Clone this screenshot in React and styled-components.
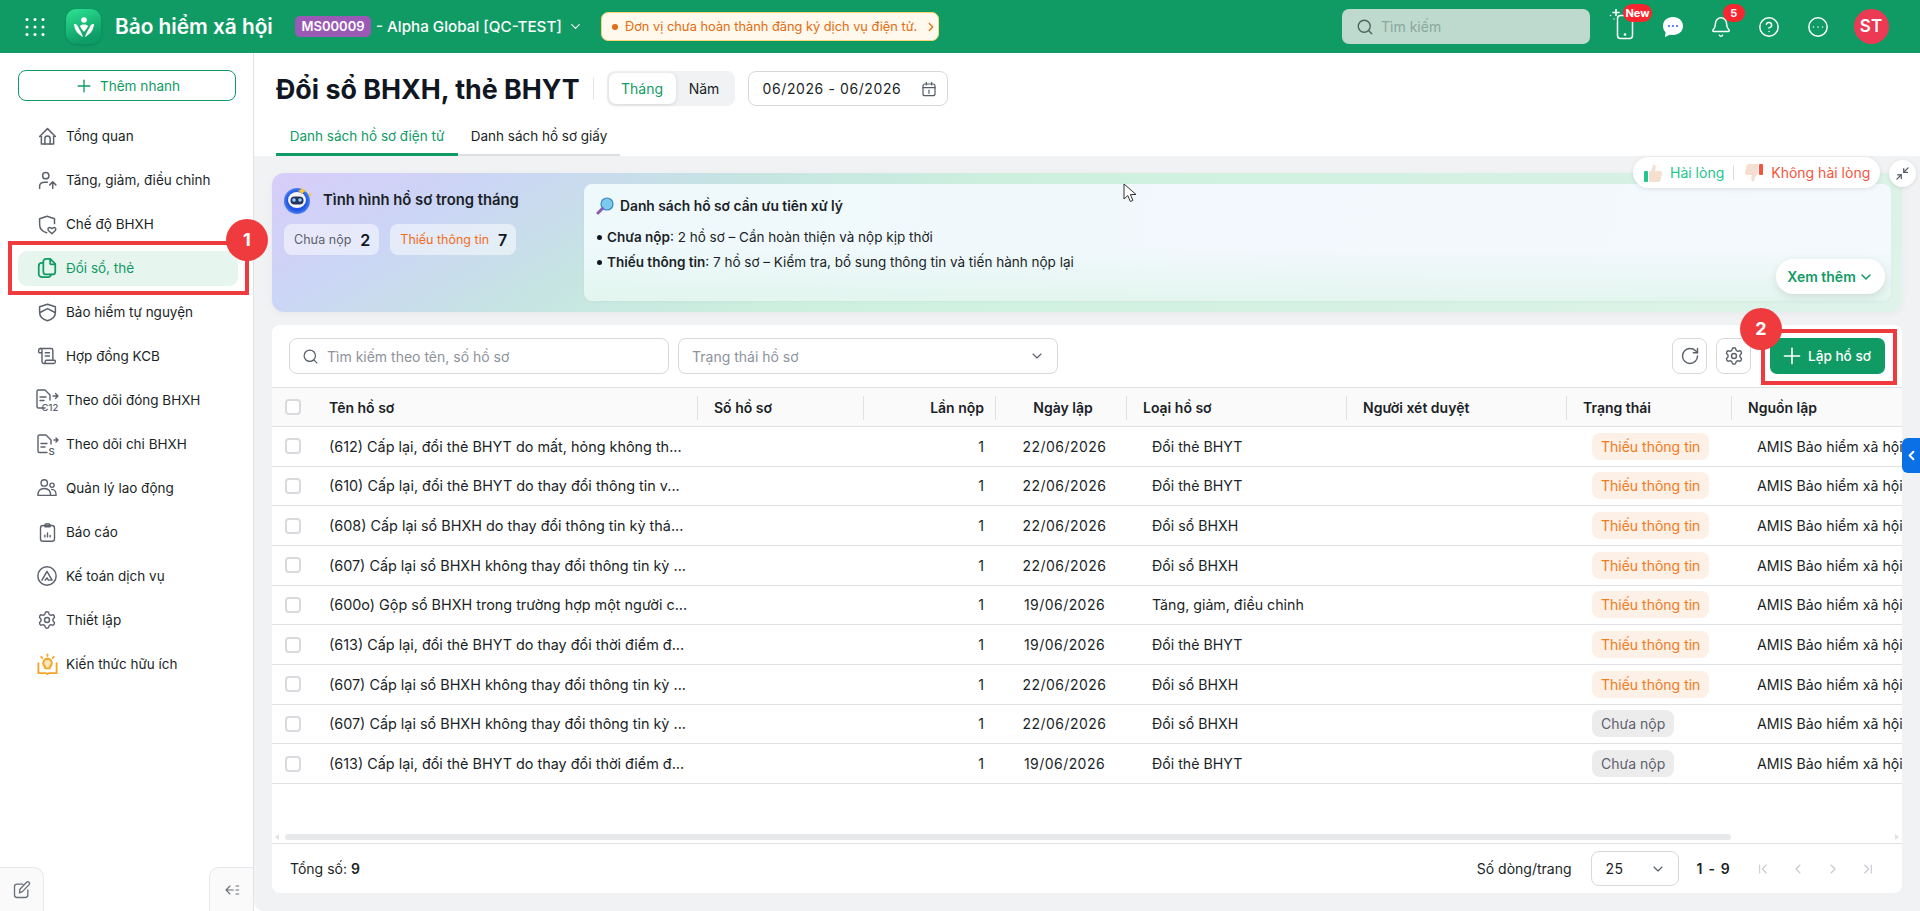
import React from 'react'
import styled, { createGlobalStyle } from 'styled-components'
import {
  Search, Plus, ChevronDown, ChevronRight, ChevronLeft, ChevronFirst, ChevronLast,
  Bell, CircleHelp, CircleEllipsis, RotateCw, Settings, Minimize2, ScrollText,
} from 'lucide-react'

const GREEN = '#109b64'

const NAV = [
  ['Tổng quan', 'home'],
  ['Tăng, giảm, điều chỉnh', 'userUp'],
  ['Chế độ BHXH', 'shieldHeart'],
  ['Đổi sổ, thẻ', 'copy'],
  ['Bảo hiểm tự nguyện', 'shield'],
  ['Hợp đồng KCB', 'scroll'],
  ['Theo dõi đóng BHXH', 'c12'],
  ['Theo dõi chi BHXH', 'fileS'],
  ['Quản lý lao động', 'users'],
  ['Báo cáo', 'report'],
  ['Kế toán dịch vụ', 'account'],
  ['Thiết lập', 'gear'],
  ['Kiến thức hữu ích', 'bulb'],
]

const MISSING = 'Thiếu thông tin'
const DRAFT = 'Chưa nộp'

const ROWS = [
  ['(612) Cấp lại, đổi thẻ BHYT do mất, hỏng không th...', '22/06/2026', 'Đổi thẻ BHYT', MISSING],
  ['(610) Cấp lại, đổi thẻ BHYT do thay đổi thông tin v...', '22/06/2026', 'Đổi thẻ BHYT', MISSING],
  ['(608) Cấp lại sổ BHXH do thay đổi thông tin kỳ thá...', '22/06/2026', 'Đổi sổ BHXH', MISSING],
  ['(607) Cấp lại sổ BHXH không thay đổi thông tin kỳ ...', '22/06/2026', 'Đổi sổ BHXH', MISSING],
  ['(600o) Gộp sổ BHXH trong trường hợp một người c...', '19/06/2026', 'Tăng, giảm, điều chỉnh', MISSING],
  ['(613) Cấp lại, đổi thẻ BHYT do thay đổi thời điểm đ...', '19/06/2026', 'Đổi thẻ BHYT', MISSING],
  ['(607) Cấp lại sổ BHXH không thay đổi thông tin kỳ ...', '22/06/2026', 'Đổi sổ BHXH', MISSING],
  ['(607) Cấp lại sổ BHXH không thay đổi thông tin kỳ ...', '22/06/2026', 'Đổi sổ BHXH', DRAFT],
  ['(613) Cấp lại, đổi thẻ BHYT do thay đổi thời điểm đ...', '19/06/2026', 'Đổi thẻ BHYT', DRAFT],
]

const Svg = ({ size = 20, children, ...rest }) => (
  <svg width={size} height={size} viewBox="0 0 24 24" fill="none" stroke="currentColor" strokeWidth="1.7" strokeLinecap="round" strokeLinejoin="round" {...rest}>
    {children}
  </svg>
)

const NavIcon = ({ name }) => {
  switch (name) {
    case 'home':
      return <Svg size={21}><path d="M3 12 12 3l9 9M5 10v10.500h14V10" /><path d="M9 20.500v-6a3 3 0 0 1 6 0v6" /></Svg>
    case 'userUp':
      return <Svg size={21}><circle cx="10" cy="6.500" r="3.600" /><path d="M3 21v-2.500C3 15.500 5.500 14 9 14h3" /><path d="M18 21v-7M14.500 17l3.500-3.500 3.500 3.500" /></Svg>
    case 'shieldHeart':
      return <Svg size={21}><path d="M11 21.500C6 20 3 16.500 3 12V5.500L11.500 2.500 20 5.500V11" /><path d="M17 22.500l-4-3.700c-1.500-2 .8-4.300 2.700-3L17 16.700l1.300-.9c1.900-1.300 4.200 1 2.700 3z" /></Svg>
    case 'copy':
      return <Svg size={22} strokeWidth="1.900"><path d="M8 6.500H6.500A3.500 3.500 0 0 0 3 10v8.500A3.500 3.500 0 0 0 6.500 22H13a3.500 3.500 0 0 0 3.500-3" /><path d="M8 5a3 3 0 0 1 3-3h4.500L21 7.500V16a3 3 0 0 1-3 3h-7a3 3 0 0 1-3-3z" /><path d="M15.500 2.500V7a1 1 0 0 0 1 1H21" /></Svg>
    case 'shield':
      return <Svg size={21}><path d="M12 2.500 21 5.500V12c0 5-4 8-9 9.500C7 20 3 17 3 12V5.500z" /><path d="M3.500 12 12 7.500l8.500 4.500" /></Svg>
    case 'scroll':
      return <ScrollText size={20} strokeWidth={1.7} />
    case 'c12':
      return (
        <Svg size={24} strokeWidth="1.400" overflow="visible">
          <path d="M10 20H3.500A1.500 1.500 0 0 1 2 18.500V3.500A1.500 1.500 0 0 1 3.500 2H10l5 5v5" />
          <path d="M5 9h6M5 12.500h4M18 8h5M20.500 5.500 23 8l-2.500 2.500" />
          <text x="6.500" y="22.500" fontSize="9.500" fontFamily="Inter, sans-serif" fontWeight="500" fill="currentColor" stroke="none">C12</text>
        </Svg>
      )
    case 'fileS':
      return (
        <Svg size={24} strokeWidth="1.400" overflow="visible">
          <path d="M12 20.500H4.500A1.500 1.500 0 0 1 3 19V4.500A1.500 1.500 0 0 1 4.500 3H11l5 5v4" />
          <path d="M6 11.500h6M6 15h4M19 8h4M21 6l2 2-2 2" />
          <text x="13.500" y="22.500" fontSize="9.500" fontFamily="Inter, sans-serif" fontWeight="600" fill="currentColor" stroke="none">S</text>
        </Svg>
      )
    case 'users':
      return <Svg size={22} strokeWidth="1.500"><circle cx="9" cy="6.500" r="3.500" /><circle cx="17.500" cy="9" r="2.300" /><path d="M2 20c0-5 2.500-7.500 7-7.500s7 2.500 7 7.500zM17 13.500c3 0 5 2 5 6.500h-6" /></Svg>
    case 'report':
      return <Svg size={21} strokeWidth="1.600"><rect x="4" y="4" width="16" height="18" rx="3" /><path d="M9 4a3 2 0 0 1 6 0v1.500H9zM9 17v-2M12 17v-4.500M15 17v-1.500" /></Svg>
    case 'account':
      return <Svg size={22} strokeWidth="1.600"><circle cx="12" cy="12" r="10" /><path d="M6.500 16.500 12 7l5.500 9.500h-4L12 14l-2 2.500" /></Svg>
    case 'gear':
      return <Settings size={20} strokeWidth={1.7} />
    case 'bulb':
      return (
        <Svg size={23} strokeWidth="1.900" stroke="#f5a425">
          <path d="M12 6a4.500 4.500 0 0 0-2.500 8.200V16h5v-1.800A4.500 4.500 0 0 0 12 6z" fill="#fde8bd" />
          <path d="M2.500 10.500V21H9.500c1 0 2 .5 2.500 1 .5-.5 1.500-1 2.500-1h7V10.500M12 1.500v1.500M5.500 4l1 1.200M18.500 4l-1 1.200" />
        </Svg>
      )
    default:
      return null
  }
}

const Logo = () => (
  <LogoBox>
    <svg width="24" height="24" viewBox="0 0 24 24" fill="#fff">
      <circle cx="12" cy="5" r="2.800" />
      <path d="M11 22C7 20 2.500 16 2 9c2-.5 4 1.500 4.500 3.500C7.500 15 9.500 17 11 22z" />
      <path d="M13 22c4-2 8.500-6 9-13-2-.5-4 1.500-4.500 3.500C16.500 15 14.500 17 13 22z" />
      <path d="M8 11c1.500-2 6.500-2 8 0-1 2.500-2.500 4-4 6-1.500-2-3-3.500-4-6z" />
    </svg>
  </LogoBox>
)

const AppsGrid = () => (
  <svg width="20" height="18" viewBox="0 0 20 18" fill="#fff">
    {[1.5, 9, 16.5].map((y) => [2, 10, 18].map((x) => <circle key={`${x}-${y}`} cx={x} cy={y} r="1.500" />))}
  </svg>
)

const ChatIcon = () => (
  <svg width="22" height="22" viewBox="0 0 22 22">
    <path d="M11 1C5.200 1 1 4.800 1 10c0 2.500 1 4.600 2.600 6.200L3 21l4.800-2.300c1 .3 2.100.4 3.200.4 5.800 0 10-3.800 10-9S16.800 1 11 1z" fill="#fff" />
    <circle cx="7" cy="10" r="1.100" fill="#3c6cf2" /><circle cx="11" cy="10" r="1.100" fill="#3c6cf2" /><circle cx="15" cy="10" r="1.100" fill="#3c6cf2" />
  </svg>
)

const PhoneSpark = () => (
  <svg width="30" height="36" viewBox="0 0 30 36" fill="none" stroke="#fff" strokeWidth="1.500" strokeLinecap="round">
    <rect x="8.500" y="6.500" width="15" height="23" rx="3" />
    <circle cx="16" cy="25.500" r=".6" fill="#fff" />
    <path d="M7 .5v6M4 3.500h6" strokeWidth="1.600" />
    <circle cx="1.500" cy="6.500" r=".8" fill="#fff" stroke="none" />
    <circle cx="5" cy="10" r=".7" fill="#fff" stroke="none" />
  </svg>
)

const Robot = () => (
  <svg width="30" height="30" viewBox="0 0 30 30">
    <defs>
      <radialGradient id="bot" cx=".5" cy=".5" r=".6"><stop offset=".6" stopColor="#1f55e6" /><stop offset="1" stopColor="#6aa0f5" /></radialGradient>
    </defs>
    <circle cx="13" cy="16" r="13" fill="url(#bot)" />
    <ellipse cx="13" cy="15" rx="9" ry="8" fill="#f4f6fb" />
    <rect x="6.500" y="11.500" width="13" height="8" rx="4" fill="#26345c" />
    <circle cx="10" cy="15" r="1.800" fill="#8fd0ff" /><circle cx="16" cy="15" r="1.800" fill="#8fd0ff" />
    <path d="M18 1c.5 3.500 1.500 4.500 5 5-3.500.5-4.500 1.500-5 5-.5-3.500-1.500-4.500-5-5 3.500-.5 4.500-1.500 5-5z" fill="#f8c534" />
    <path d="M26 7c.2 1.500.8 2.100 2.500 2.500C26.800 9.900 26.200 10.500 26 12c-.2-1.500-.8-2.100-2.500-2.500C25.200 9.100 25.800 8.500 26 7z" fill="#f8c534" />
  </svg>
)

const Magnifier = () => (
  <svg width="18" height="18" viewBox="0 0 18 18">
    <circle cx="11" cy="7" r="6" fill="#7cc8ee" stroke="#3a87bd" strokeWidth="1.200" />
    <path d="M6.500 11.500 2 16" stroke="#8a5ab8" strokeWidth="3" strokeLinecap="round" />
  </svg>
)

const Thumb = ({ down, color }) => (
  <FlipBox $down={down}>
    <svg width="20" height="20" viewBox="0 0 20 20">
      <rect x="1" y="8" width="4" height="11" rx="1" fill={color} />
      <path d="M6 9c2-1 3.500-3 4-7 .2-1 2.700-.6 2.700 2 0 1.500-.4 3-.7 4h5c1.500 0 2.400 1.200 2 2.500l-1.500 6.500c-.3 1.200-1.200 2-2.500 2H6z" fill="#f5dfd0" />
    </svg>
  </FlipBox>
)

const Cursor = () => (
  <svg width="14" height="20" viewBox="0 0 14 20">
    <path d="M1 1v15l3.800-3.500 2.500 6 2.600-1.100-2.500-5.900H13z" fill="#fff" stroke="#333" strokeWidth="1" />
  </svg>
)

const CalendarIcon = () => (
  <Svg size={16} strokeWidth="1.800" color="#555b66">
    <rect x="3" y="4.500" width="18" height="17.500" rx="3" />
    <path d="M3 10h18M8 2v4M16 2v4M12 13.500v5" />
  </Svg>
)

const PencilIcon = () => (
  <Svg size={20} strokeWidth="1.600">
    <path d="M13 5H6a3 3 0 0 0-3 3v10a3 3 0 0 0 3 3h10a3 3 0 0 0 3-3v-6" />
    <path d="M9 15.500 9.500 11l8-8.300a2 2 0 0 1 3 2.800L12.500 14z" />
  </Svg>
)

const CollapseIcon = () => (
  <Svg size={16} strokeWidth="1.700">
    <path d="M9 6 3 12l6 6M3 12h11M18 6h4M18 12h4M18 18h4" />
  </Svg>
)

const App = () => (
  <Page>
    <GlobalStyle />
    <TopBar>
      <GridBtn><AppsGrid /></GridBtn>
      <Logo />
      <Brand>Bảo hiểm xã hội</Brand>
      <OrgCode>MS00009</OrgCode>
      <OrgName>- Alpha Global [QC-TEST]</OrgName>
      <ChevronDown size={15} color="#fff" strokeWidth={1.8} />
      <Notice>
        <NoticeDot />
        Đơn vị chưa hoàn thành đăng ký dịch vụ điện tử.
        <ChevronRight size={14} strokeWidth={2.2} />
      </Notice>
      <TopSearch>
        <Search size={18} color="#4d6258" strokeWidth={1.8} />
        Tìm kiếm
      </TopSearch>
      <TopIcons>
        <TopIcon>
          <PhoneSpark />
          <TopBadge $wide>New</TopBadge>
        </TopIcon>
        <TopIcon><ChatIcon /></TopIcon>
        <TopIcon>
          <Bell size={22} strokeWidth={1.6} />
          <TopBadge>5</TopBadge>
        </TopIcon>
        <TopIcon><CircleHelp size={22} strokeWidth={1.6} /></TopIcon>
        <TopIcon><CircleEllipsis size={22} strokeWidth={1.6} /></TopIcon>
        <Avatar>ST</Avatar>
      </TopIcons>
    </TopBar>

    <Body>
      <Sidebar>
        <QuickAdd><Plus size={20} strokeWidth={1.6} />Thêm nhanh</QuickAdd>
        <NavList>
          {NAV.map(([label, icon]) => (
            <NavItem key={label} $active={icon === 'copy'}>
              <NavIconBox $active={icon === 'copy'}><NavIcon name={icon} /></NavIconBox>
              {label}
              {icon === 'copy' && (
                <>
                  <NavMark />
                  <NavStep>1</NavStep>
                </>
              )}
            </NavItem>
          ))}
        </NavList>
        <SideFoot>
          <SideTab $side="left"><PencilIcon /></SideTab>
          <SideTab $side="right"><CollapseIcon /></SideTab>
        </SideFoot>
      </Sidebar>

      <Main>
        <MainHead>
          <TitleRow>
            <Title>Đổi sổ BHXH, thẻ BHYT</Title>
            <TitleDivider />
            <Toggle>
              <ToggleItem $active>Tháng</ToggleItem>
              <ToggleItem>Năm</ToggleItem>
            </Toggle>
            <DateRange>06/2026 - 06/2026<CalendarIcon /></DateRange>
          </TitleRow>
          <Tabs>
            <Tab $active>Danh sách hồ sơ điện tử</Tab>
            <Tab>Danh sách hồ sơ giấy</Tab>
          </Tabs>
        </MainHead>

        <Feedback>
          <Thumb color="#22c58b" />
          <FeedText $color="#22c58b">Hài lòng</FeedText>
          <FeedDivider />
          <Thumb down color="#f4553c" />
          <FeedText $color="#f4553c">Không hài lòng</FeedText>
        </Feedback>
        <ShrinkBtn><Minimize2 size={15} strokeWidth={2} /></ShrinkBtn>
        <SideHandle><ChevronLeft size={15} strokeWidth={3.2} /></SideHandle>
        <CursorMark><Cursor /></CursorMark>

        <Banner>
          <BannerLeft>
            <BannerHeading>
              <Robot />
              <BannerTitle>Tình hình hồ sơ trong tháng</BannerTitle>
            </BannerHeading>
            <Chips>
              <Chip>Chưa nộp <ChipNum>2</ChipNum></Chip>
              <Chip $warn>Thiếu thông tin <ChipNum>7</ChipNum></Chip>
            </Chips>
          </BannerLeft>
          <BannerPanel>
            <PanelTitle><Magnifier />Danh sách hồ sơ cần ưu tiên xử lý</PanelTitle>
            <Bullet><b>Chưa nộp</b>: 2 hồ sơ – Cần hoàn thiện và nộp kịp thời</Bullet>
            <Bullet><b>Thiếu thông tin</b>: 7 hồ sơ – Kiểm tra, bổ sung thông tin và tiến hành nộp lại</Bullet>
            <MoreBtn>Xem thêm<ChevronDown size={16} strokeWidth={2.2} /></MoreBtn>
          </BannerPanel>
        </Banner>

        <Card>
          <Toolbar>
            <SearchBox>
              <Search size={17} strokeWidth={1.7} color="#555b66" />
              Tìm kiếm theo tên, số hồ sơ
            </SearchBox>
            <StatusSelect>
              Trạng thái hồ sơ
              <ChevronDown size={16} strokeWidth={1.6} color="#555b66" />
            </StatusSelect>
            <ToolRight>
              <IconBtn><RotateCw size={20} strokeWidth={1.7} /></IconBtn>
              <IconBtn><Settings size={20} strokeWidth={1.7} /></IconBtn>
              <CreateWrap>
                <CreateBtn><Plus size={26} strokeWidth={1.5} />Lập hồ sơ</CreateBtn>
                <CreateMark />
                <CreateStep>2</CreateStep>
              </CreateWrap>
            </ToolRight>
          </Toolbar>

          <TableWrap>
            <HeadRow>
              <CheckCell><Check /></CheckCell>
              <HeadCell $pad="17px">Tên hồ sơ</HeadCell>
              <HeadCell $pad="16px">Số hồ sơ</HeadCell>
              <HeadCell $align="right">Lần nộp</HeadCell>
              <HeadCell $align="center" $pad="3px">Ngày lập</HeadCell>
              <HeadCell $pad="16px">Loại hồ sơ</HeadCell>
              <HeadCell $pad="16px">Người xét duyệt</HeadCell>
              <HeadCell $pad="16px">Trạng thái</HeadCell>
              <HeadCell $pad="16px" $last>Nguồn lập</HeadCell>
            </HeadRow>
            {ROWS.map(([name, date, kind, status], i) => (
              <Row key={i}>
                <CheckCell><Check /></CheckCell>
                <NameCell $pad="17px">{name}</NameCell>
                <Cell />
                <Cell $align="right">1</Cell>
                <DateCell>{date}</DateCell>
                <Cell $pad="25px">{kind}</Cell>
                <Cell />
                <Cell $pad="25px"><Pill $warn={status === MISSING}>{status}</Pill></Cell>
                <Cell $pad="25px">AMIS Bảo hiểm xã hội</Cell>
              </Row>
            ))}
          </TableWrap>

          <ScrollBar>
            <ScrollArrow />
            <ScrollThumb />
            <ScrollArrow $right />
          </ScrollBar>

          <Footer>
            <Total>Tổng số: <b>9</b></Total>
            <PerPage>Số dòng/trang</PerPage>
            <PageSelect>25<ChevronDown size={16} strokeWidth={1.6} color="#555b66" /></PageSelect>
            <PageRange>1 - 9</PageRange>
            <Pager>
              <ChevronFirst size={16} strokeWidth={1.6} />
              <ChevronLeft size={16} strokeWidth={1.6} />
              <ChevronRight size={16} strokeWidth={1.6} />
              <ChevronLast size={16} strokeWidth={1.6} />
            </Pager>
          </Footer>
        </Card>
      </Main>
    </Body>
  </Page>
)

export default App

const GlobalStyle = createGlobalStyle`
  html, body { margin: 0; padding: 0; height: 100%; overflow: hidden; }
  body { font-family: Inter, "Noto Sans", sans-serif; color: #1b1f27; font-size: 14px; background: #fff; }
  * { box-sizing: border-box; }
`

const Page = styled.div`
  height: 100vh;
  display: flex;
  flex-direction: column;
  overflow: hidden;
`

const TopBar = styled.header`
  height: 53px;
  flex: none;
  background: ${GREEN};
  display: flex;
  align-items: center;
  padding-left: 25px;
  color: #fff;
`

const GridBtn = styled.div`
  display: flex;
  margin-right: 21px;
`

const LogoBox = styled.div`
  width: 35px;
  height: 35px;
  flex: none;
  border-radius: 10px;
  background: linear-gradient(160deg, #2ce391, #0e9c66 80%);
  display: flex;
  align-items: center;
  justify-content: center;
  box-shadow: 0 1px 3px rgba(0, 0, 0, 0.15);
`

const Brand = styled.div`
  margin-left: 14px;
  width: 158px;
  font-size: 20.800px;
  font-weight: 600;
  white-space: nowrap;
`

const OrgCode = styled.div`
  margin-left: 22px;
  width: 76px;
  height: 21px;
  flex: none;
  border-radius: 5px;
  background: #9b59b6;
  font-size: 13px;
  font-weight: 600;
  line-height: 21px;
  text-align: center;
`

const OrgName = styled.div`
  margin: 0 9px 0 5px;
  width: 183px;
  font-size: 15.200px;
  font-weight: 500;
  white-space: nowrap;
`

const Notice = styled.div`
  margin-left: 18px;
  width: 338px;
  height: 29px;
  flex: none;
  display: flex;
  align-items: center;
  gap: 7px;
  padding: 0 9px 0 10px;
  border-radius: 7px;
  border: 1px solid #f8d572;
  background: #fff8ec;
  color: #e26c12;
  font-size: 12.800px;
  white-space: nowrap;
  svg { margin-left: auto; flex: none; }
`

const NoticeDot = styled.span`
  width: 6px;
  height: 6px;
  flex: none;
  border-radius: 50%;
  background: #e26c12;
`

const TopSearch = styled.div`
  margin-left: auto;
  width: 248px;
  height: 35px;
  flex: none;
  border-radius: 7px;
  background: #bedacf;
  display: flex;
  align-items: center;
  gap: 7px;
  padding-left: 14px;
  color: #8ba79c;
  font-size: 14px;
`

const TopIcons = styled.div`
  display: flex;
  align-items: center;
  margin-left: 10px;
  padding-right: 31.500px;
`

const TopIcon = styled.div`
  position: relative;
  width: 48.400px;
  height: 36px;
  display: flex;
  align-items: center;
  justify-content: center;
`

const TopBadge = styled.span`
  position: absolute;
  top: -5px;
  left: ${(p) => (p.$wide ? '23px' : '26px')};
  height: 18px;
  min-width: ${(p) => (p.$wide ? '29px' : '22px')};
  padding: 0 2px;
  border-radius: 9px;
  background: #f7262f;
  color: #fff;
  font-size: 11px;
  font-weight: 700;
  line-height: 18px;
  text-align: center;
`

const Avatar = styled.div`
  width: 35px;
  height: 35px;
  margin-left: 11.500px;
  border-radius: 50%;
  background: #ec3a55;
  font-size: 17px;
  font-weight: 600;
  line-height: 35px;
  text-align: center;
`

const Body = styled.div`
  flex: 1;
  min-height: 0;
  display: flex;
`

const Sidebar = styled.aside`
  position: relative;
  z-index: 5;
  width: 254px;
  flex: none;
  display: flex;
  flex-direction: column;
  border-right: 1px solid #e1e3e7;
`

const QuickAdd = styled.div`
  margin: 17px 17px 0 18px;
  height: 31px;
  flex: none;
  border: 1px solid ${GREEN};
  border-radius: 8px;
  display: flex;
  align-items: center;
  justify-content: center;
  gap: 6px;
  color: ${GREEN};
  font-size: 13.600px;
`

const NavList = styled.nav`
  margin: 18px 15px 0 18px;
  display: flex;
  flex-direction: column;
  gap: 9px;
`

const NavItem = styled.div`
  position: relative;
  height: 35px;
  padding: 0 0 1px 17px;
  display: flex;
  align-items: center;
  gap: 7px;
  border-radius: 9px;
  font-size: 13.500px;
  white-space: nowrap;
  color: ${(p) => (p.$active ? GREEN : '#1b1f27')};
  background: ${(p) => (p.$active ? '#e7f5ef' : 'transparent')};
`

const NavIconBox = styled.span`
  width: 24px;
  height: 24px;
  display: flex;
  align-items: center;
  justify-content: center;
  color: ${(p) => (p.$active ? GREEN : '#5c616c')};
`

const NavMark = styled.span`
  position: absolute;
  left: -10px;
  top: -10px;
  width: 241px;
  height: 54px;
  border: 4px solid #ef3b3e;
  pointer-events: none;
`

const NavStep = styled.span`
  position: absolute;
  left: 208px;
  top: -32px;
  width: 42px;
  height: 42px;
  border-radius: 50%;
  background: #ef3b3e;
  color: #fff;
  font-size: 18px;
  font-weight: 700;
  line-height: 42px;
  text-align: center;
`

const SideFoot = styled.div`
  margin-top: auto;
  display: flex;
  justify-content: space-between;
`

const SideTab = styled.div`
  width: 44px;
  height: 44px;
  display: flex;
  align-items: center;
  justify-content: center;
  background: #fafafb;
  color: #6a6f79;
  border-top: 1px solid #e6e8eb;
  ${(p) => (p.$side === 'left'
    ? 'border-right: 1px solid #e6e8eb; border-top-right-radius: 10px;'
    : 'border-left: 1px solid #e6e8eb; border-top-left-radius: 10px;')}
`

const Main = styled.main`
  position: relative;
  flex: 1;
  min-width: 0;
  display: flex;
  flex-direction: column;
  background: #f0f2f4;
  border-bottom-left-radius: 10px;
`

const MainHead = styled.div`
  height: 103px;
  flex: none;
  background: #fff;
  padding: 18px 0 0 22px;
`

const TitleRow = styled.div`
  display: flex;
  align-items: center;
  height: 35px;
`

const Title = styled.h1`
  margin: 0;
  font-size: 26.800px;
  font-weight: 700;
  color: #111722;
  white-space: nowrap;
`

const TitleDivider = styled.span`
  width: 1px;
  height: 22px;
  margin: 0 13px;
  background: #e3e5e8;
`

const Toggle = styled.div`
  width: 128px;
  height: 35px;
  padding: 2px;
  border-radius: 8px;
  background: #f0f2f4;
  display: flex;
`

const ToggleItem = styled.div`
  width: ${(p) => (p.$active ? '67px' : '57px')};
  border-radius: 7px;
  display: flex;
  align-items: center;
  justify-content: center;
  font-size: 14px;
  color: ${(p) => (p.$active ? GREEN : '#1b1f27')};
  background: ${(p) => (p.$active ? '#fff' : 'transparent')};
  box-shadow: ${(p) => (p.$active ? '0 1px 4px rgba(0,0,0,.12)' : 'none')};
`

const DateRange = styled.div`
  margin-left: 13px;
  width: 200px;
  height: 35px;
  border: 1px solid #d6d8dc;
  border-radius: 8px;
  display: flex;
  align-items: center;
  justify-content: space-between;
  padding: 0 10px 0 14px;
  font-size: 14px;
  letter-spacing: 0.6px;
`

const Tabs = styled.div`
  margin-top: 11px;
  height: 39px;
  display: flex;
`

const Tab = styled.div`
  height: 39px;
  padding: 1px 14px 0;
  width: ${(p) => (p.$active ? '182px' : '162px')};
  display: flex;
  align-items: center;
  justify-content: center;
  font-size: 13.500px;
  white-space: nowrap;
  color: ${(p) => (p.$active ? GREEN : '#1b1f27')};
  border-bottom: ${(p) => (p.$active ? `3px solid ${GREEN}` : '2px solid #dcdee2')};
`

const Feedback = styled.div`
  position: absolute;
  left: 1379px;
  top: 104px;
  width: 247px;
  height: 31px;
  border-radius: 16px;
  background: #fff;
  box-shadow: 0 1px 5px rgba(0, 0, 0, 0.1);
  z-index: 2;
  display: flex;
  align-items: center;
  padding-left: 10px;
  gap: 7px;
`

const FlipBox = styled.span`
  display: flex;
  transform: ${(p) => (p.$down ? 'rotate(180deg)' : 'none')};
`

const FeedText = styled.span`
  font-size: 14px;
  color: ${(p) => p.$color};
  white-space: nowrap;
`

const FeedDivider = styled.span`
  width: 1px;
  height: 14px;
  margin: 0 3px 0 2px;
  background: #d9dbdf;
`

const ShrinkBtn = styled.div`
  position: absolute;
  left: 1635px;
  top: 107px;
  width: 27px;
  height: 27px;
  border-radius: 50%;
  background: #fff;
  color: #555b66;
  z-index: 2;
  display: flex;
  align-items: center;
  justify-content: center;
  box-shadow: 0 1px 4px rgba(0, 0, 0, 0.1);
`

const SideHandle = styled.div`
  position: absolute;
  left: 1648px;
  top: 385px;
  width: 18px;
  height: 35px;
  border-radius: 6px 0 0 6px;
  background: #0b6fe6;
  color: #fff;
  z-index: 2;
  display: flex;
  align-items: center;
  justify-content: center;
`

const CursorMark = styled.div`
  position: absolute;
  left: 869px;
  top: 130px;
  z-index: 3;
  line-height: 0;
`

const Banner = styled.section`
  position: relative;
  margin: 17px 18px 0;
  height: 139px;
  flex: none;
  border-radius: 12px;
  background: linear-gradient(150deg, #d8cdf9 0%, #cbd5f5 12%, #c6e5e2 26%, #cdf0de 40%, #dff3ea 100%);
  box-shadow: 0 2px 8px rgba(0, 0, 0, 0.04);
  display: flex;
  padding: 11px 11px 11px 12px;
`

const BannerLeft = styled.div`
  width: 300px;
  flex: none;
`

const BannerHeading = styled.div`
  display: flex;
  align-items: center;
  gap: 9px;
  height: 30px;
  padding-top: 1px;
`

const BannerTitle = styled.div`
  font-size: 14.800px;
  font-weight: 600;
  white-space: nowrap;
`

const Chips = styled.div`
  margin-top: 10px;
  display: flex;
  gap: 11px;
`

const Chip = styled.div`
  height: 31px;
  padding: 0 9px 0 10px;
  border-radius: 8px;
  background: rgba(255, 255, 255, 0.5);
  display: flex;
  align-items: center;
  gap: 9px;
  font-size: 12.500px;
  white-space: nowrap;
  color: ${(p) => (p.$warn ? '#f36c1d' : '#5c616c')};
`

const ChipNum = styled.b`
  color: #111722;
  font-size: 16px;
  font-weight: 600;
`

const BannerPanel = styled.div`
  position: relative;
  flex: 1;
  border-radius: 8px;
  padding: 13px 12px;
  background:
    linear-gradient(180deg, rgba(215, 243, 228, 0) 55%, rgba(215, 243, 228, 0.55) 100%),
    linear-gradient(100deg, #eef9fb, #f3f8fd 60%, #f4f9fd 100%);
  box-shadow: 0 1px 3px rgba(0, 0, 0, 0.03);
`

const PanelTitle = styled.div`
  display: flex;
  align-items: center;
  gap: 6px;
  height: 18px;
  font-size: 13.800px;
  font-weight: 600;
  margin-bottom: 10px;
`

const Bullet = styled.div`
  position: relative;
  height: 25px;
  line-height: 25px;
  padding-left: 11px;
  font-size: 13.500px;
  b { font-weight: 600; }
  &::before {
    content: '';
    position: absolute;
    left: 1px;
    top: 10px;
    width: 5px;
    height: 5px;
    border-radius: 50%;
    background: #111722;
  }
`

const MoreBtn = styled.div`
  position: absolute;
  right: 6px;
  top: 75px;
  width: 109px;
  height: 35px;
  border-radius: 18px;
  background: #fff;
  color: ${GREEN};
  font-size: 14px;
  font-weight: 600;
  display: flex;
  align-items: center;
  justify-content: center;
  gap: 2px;
  box-shadow: 0 3px 10px rgba(0, 0, 0, 0.1);
`

const Card = styled.section`
  margin: 13px 18px 18px;
  flex: 1;
  min-height: 0;
  background: #fff;
  border-radius: 8px;
  display: flex;
  flex-direction: column;
`

const Toolbar = styled.div`
  height: 62px;
  flex: none;
  display: flex;
  align-items: flex-start;
  padding: 13px 17px 0;
`

const SearchBox = styled.div`
  width: 380px;
  height: 36px;
  margin-right: 9px;
  border: 1px solid #d6d8dc;
  border-radius: 8px;
  display: flex;
  align-items: center;
  gap: 8px;
  padding-left: 12px;
  color: #8d929b;
  font-size: 14px;
`

const StatusSelect = styled.div`
  width: 380px;
  height: 36px;
  border: 1px solid #d6d8dc;
  border-radius: 8px;
  display: flex;
  align-items: center;
  justify-content: space-between;
  padding: 0 12px 0 13px;
  color: #8d929b;
  font-size: 14px;
`

const ToolRight = styled.div`
  margin-left: auto;
  display: flex;
  gap: 9px;
`

const IconBtn = styled.div`
  width: 35px;
  height: 36px;
  border: 1px solid #d6d8dc;
  border-radius: 8px;
  display: flex;
  align-items: center;
  justify-content: center;
  color: #5c616c;
`

const CreateWrap = styled.div`
  position: relative;
  margin-left: 10px;
`

const CreateBtn = styled.div`
  width: 115px;
  height: 36px;
  border-radius: 7px;
  background: ${GREEN};
  color: #fff;
  font-size: 13.600px;
  font-weight: 500;
  display: flex;
  align-items: center;
  padding-left: 9px;
  gap: 3px;
`

const CreateMark = styled.span`
  position: absolute;
  left: -9px;
  top: -9px;
  width: 136px;
  height: 56px;
  border: 4px solid #ef3b3e;
  pointer-events: none;
`

const CreateStep = styled.span`
  position: absolute;
  left: -30px;
  top: -30px;
  width: 42px;
  height: 42px;
  border-radius: 50%;
  background: #ef3b3e;
  color: #fff;
  font-size: 18px;
  font-weight: 700;
  line-height: 42px;
  text-align: center;
`

const COLS = '40px 386px 166px 132px 131px 220px 220px 165px 240px'

const TableWrap = styled.div`
  flex: 1;
  min-height: 0;
  overflow: hidden;
`

const HeadRow = styled.div`
  display: grid;
  grid-template-columns: ${COLS};
  height: 40px;
  background: #fafafa;
  border-top: 1px solid #dfe1e4;
  border-bottom: 1px solid #dfe1e4;
  align-items: center;
`

const Row = styled.div`
  display: grid;
  grid-template-columns: ${COLS};
  height: 39.670px;
  border-bottom: 1px solid #dfe1e4;
  align-items: center;
`

const CheckCell = styled.div`
  padding-left: 13px;
  display: flex;
`

const Check = styled.span`
  width: 16px;
  height: 16px;
  border: 2px solid #d8dade;
  border-radius: 4px;
  background: #fff;
`

const HeadCell = styled.div`
  position: relative;
  font-size: 14px;
  font-weight: 600;
  white-space: nowrap;
  padding-left: ${(p) => p.$pad || '0'};
  padding-right: ${(p) => (p.$align === 'right' ? '12px' : '0')};
  text-align: ${(p) => p.$align || 'left'};
  &::after {
    content: '';
    display: ${(p) => (p.$last ? 'none' : 'block')};
    position: absolute;
    right: 0;
    top: -3px;
    width: 1px;
    height: 24px;
    background: #dfe1e4;
  }
`

const Cell = styled.div`
  font-size: 14.200px;
  white-space: nowrap;
  overflow: hidden;
  padding-left: ${(p) => p.$pad || '0'};
  padding-right: ${(p) => (p.$align === 'right' ? '12px' : '0')};
  text-align: ${(p) => p.$align || 'left'};
`

const NameCell = styled(Cell)`
  font-size: 14.400px;
`

const DateCell = styled.div`
  font-size: 14px;
  letter-spacing: 0.45px;
  padding-left: 6px;
  text-align: center;
  white-space: nowrap;
`

const Pill = styled.span`
  display: inline-flex;
  align-items: center;
  height: 27px;
  padding: 0 9px;
  border-radius: 8px;
  font-size: 14px;
  color: ${(p) => (p.$warn ? '#f47a20' : '#5c616c')};
  background: ${(p) => (p.$warn ? '#fdf0e6' : '#ececec')};
`

const ScrollBar = styled.div`
  height: 9px;
  flex: none;
  display: flex;
  align-items: flex-start;
  padding: 0 3px;
`

const ScrollThumb = styled.div`
  margin-left: 6px;
  width: 1446px;
  height: 6px;
  border-radius: 3px;
  background: #e8e9eb;
`

const ScrollArrow = styled.span`
  width: 0;
  height: 0;
  border-top: 3px solid transparent;
  border-bottom: 3px solid transparent;
  ${(p) => (p.$right
    ? 'margin-left: auto; border-left: 4px solid #e0e1e4;'
    : 'border-right: 4px solid #e0e1e4;')}
`

const Footer = styled.div`
  height: 50px;
  flex: none;
  border-top: 1px solid #dfe1e4;
  display: flex;
  align-items: center;
  padding-left: 18px;
`

const Total = styled.div`
  font-size: 14px;
  b { font-weight: 600; }
`

const PerPage = styled.div`
  margin-left: auto;
  font-size: 14px;
`

const PageSelect = styled.div`
  margin-left: 19px;
  width: 88px;
  height: 35px;
  border: 1px solid #d6d8dc;
  border-radius: 8px;
  display: flex;
  align-items: center;
  justify-content: space-between;
  padding: 0 12px 0 14px;
  font-size: 14px;
  letter-spacing: 0.5px;
`

const PageRange = styled.div`
  margin-left: 18px;
  font-size: 14px;
  font-weight: 600;
  letter-spacing: 1.200px;
  white-space: nowrap;
`

const Pager = styled.div`
  margin: 0 26px 0 24px;
  display: flex;
  gap: 19px;
  color: #c6c9ce;
`
